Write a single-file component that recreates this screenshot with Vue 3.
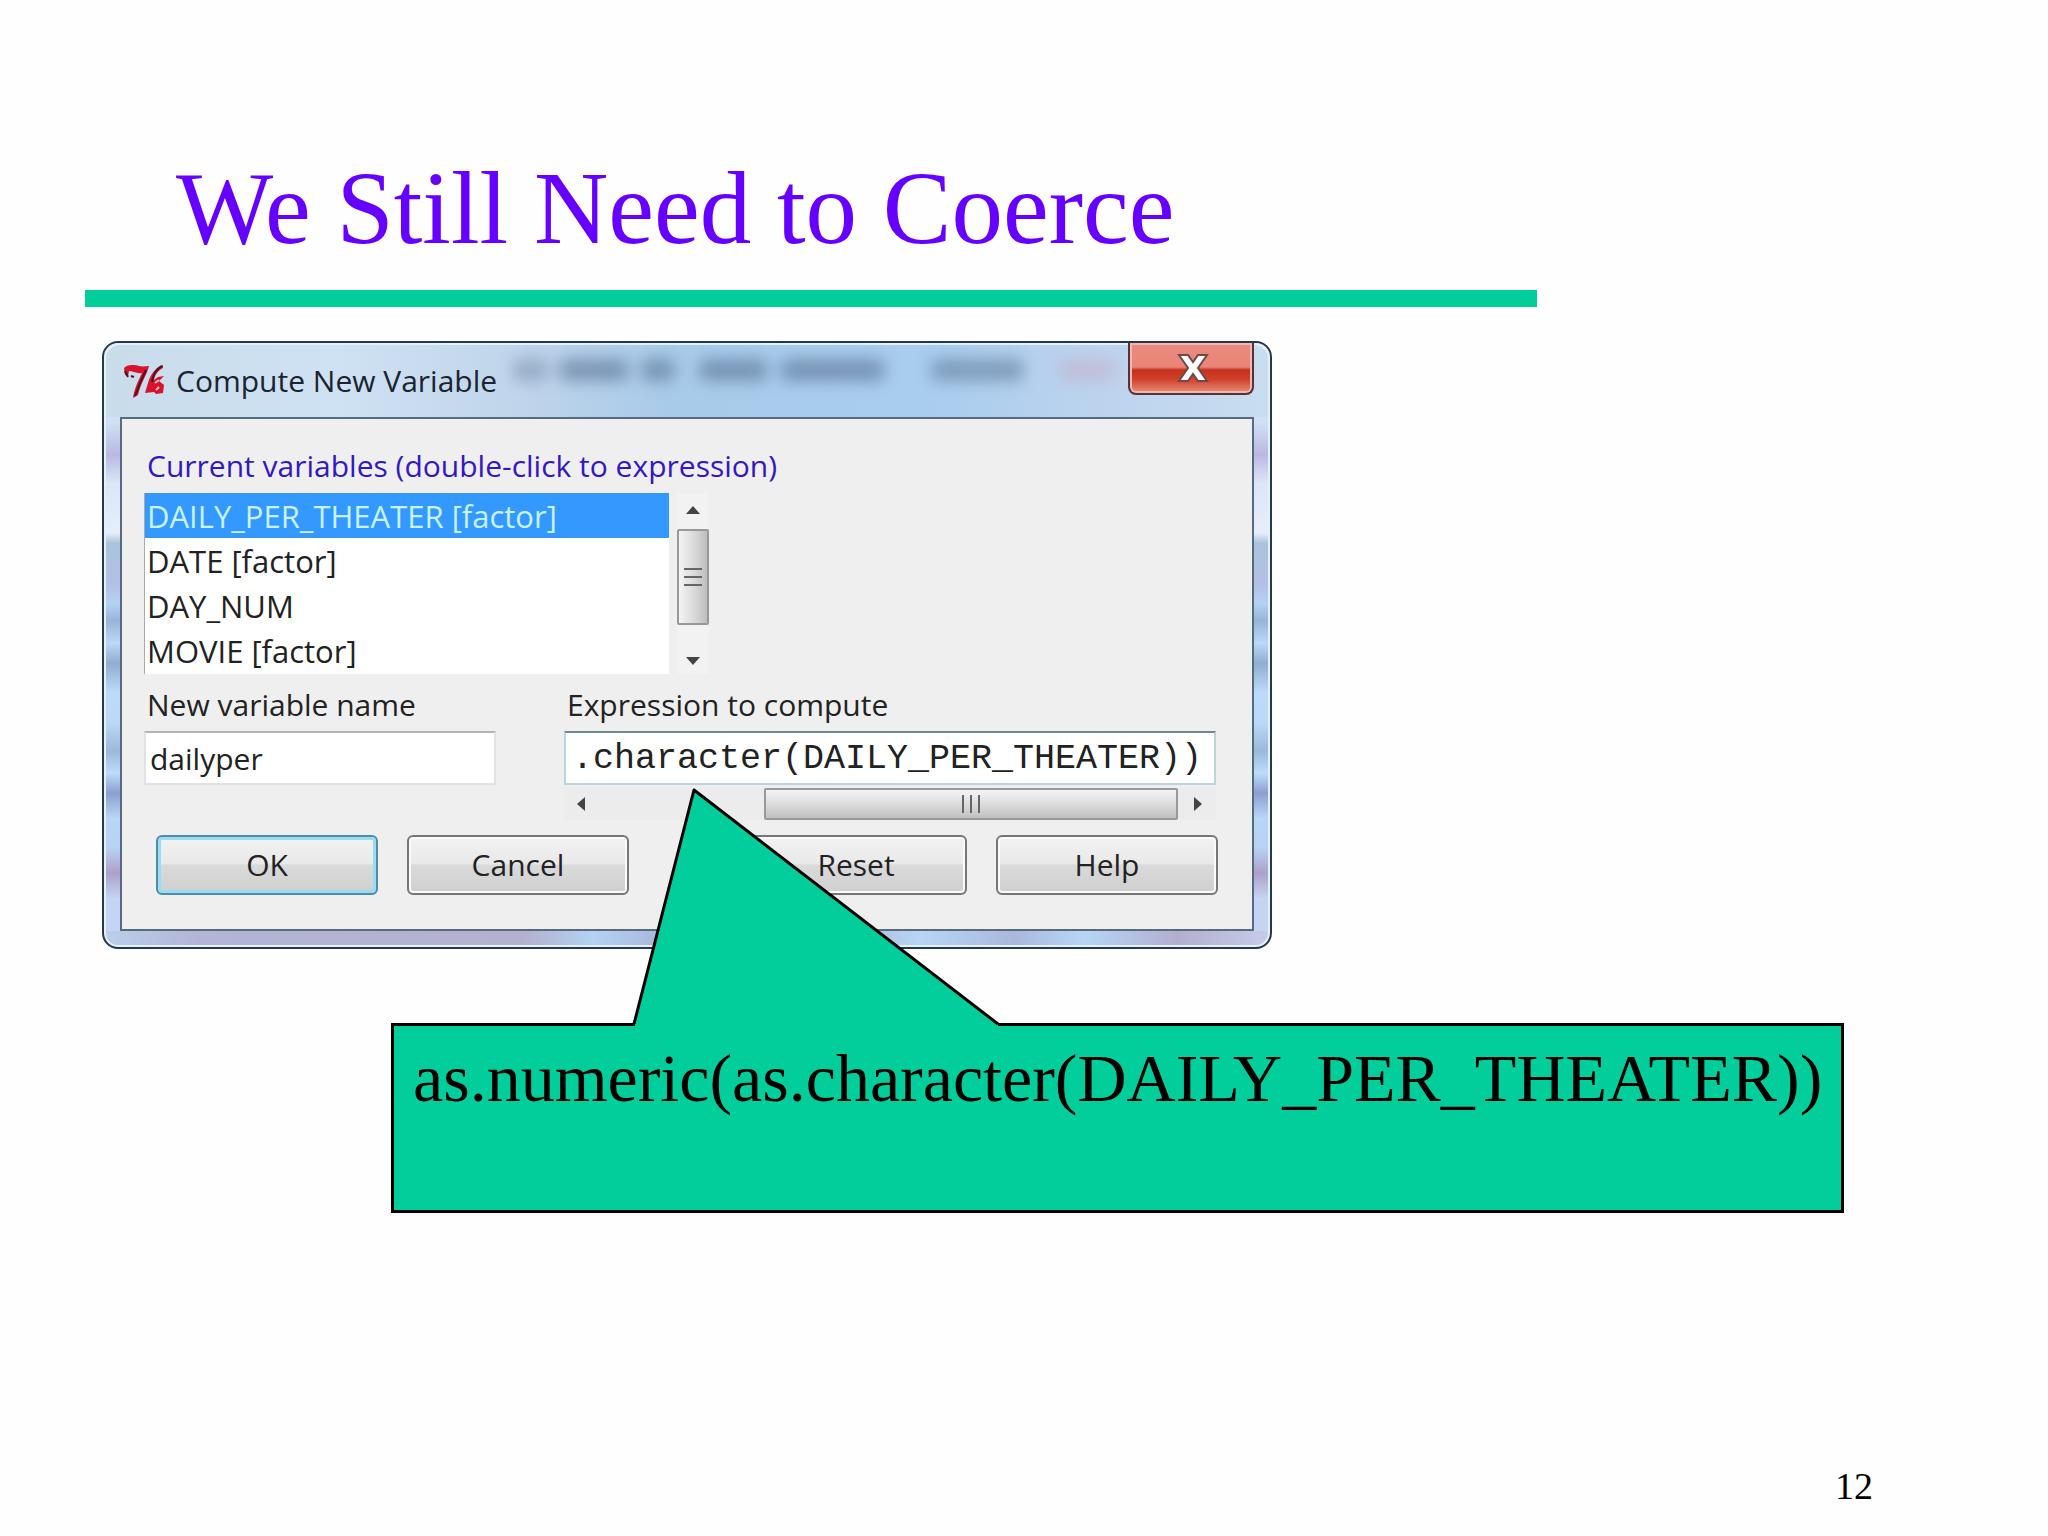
<script setup>
import { ref } from 'vue'

const variables = ['DAILY_PER_THEATER [factor]', 'DATE [factor]', 'DAY_NUM', 'MOVIE [factor]']
const selected = ref(variables[0])
const newName = ref('dailyper')
const expression = ref('.character(DAILY_PER_THEATER))')
</script>

<template>
  <main class="slide">
    <h1 class="title">We Still Need to Coerce</h1>
    <div class="rule"></div>

    <section class="window">
      <header class="titlebar">
        <svg class="logo" viewBox="0 0 42 36" aria-hidden="true">
          <path d="M1 5C5 1 12 2 16 3 20 4 23 3 26 3 24 12 18 19 15 32L10 35C11 27 15 18 19 10 14 11 9 8 6 8L5 13 2 12Z" fill="#d8122c" />
          <path d="M2 8 5 14M8 13l3 1M23 7C19 15 16 22 12 33" stroke="#4a1424" stroke-width="2" fill="none" />
          <path d="M40 2C33 4 27 12 25 20L22 30 31 29 33 31 40 30 41 22 36 18 41 13 35 14 31 17C32 11 36 7 40 5Z" fill="#d8122c" />
          <path d="M39 3C33 6 30 12 29 19" stroke="#4a1424" stroke-width="2" fill="none" />
          <path d="M32 20l4-3M33 27l3-3" stroke="#f0c4b4" stroke-width="2" fill="none" />
        </svg>
        <h2 class="caption">Compute New Variable</h2>
        <span class="glass" aria-hidden="true"><i class="s1"></i><i class="s2"></i><i class="s3"></i><i class="s4"></i><i class="s5"></i><i class="s6"></i><i class="s7"></i></span>
        <button class="close" type="button" aria-label="Close">
          <svg viewBox="0 0 32 30" aria-hidden="true">
            <path d="M2 2h9l5 7 5-7h9l-9 13 9 13h-9l-5-7-5 7H2l9-13Z" fill="#fafafa" stroke="#6b4a4c" stroke-width="2" />
          </svg>
        </button>
      </header>

      <form class="body" @submit.prevent>
        <label class="label heading" for="vars">Current variables (double-click to expression)</label>
        <div class="list-row">
          <select id="vars" v-model="selected" class="list" size="4">
            <option v-for="v in variables" :key="v" :value="v">{{ v }}</option>
          </select>
          <div class="vbar" aria-hidden="true">
            <svg class="arrow" viewBox="0 0 16 10"><path d="M8 1 15 9H1Z" /></svg>
            <div class="vthumb"><b></b><b></b><b></b></div>
            <svg class="arrow" viewBox="0 0 16 10"><path d="M1 1h14L8 9Z" /></svg>
          </div>
        </div>

        <div class="fields">
          <div class="field name">
            <label class="label" for="newname">New variable name</label>
            <input id="newname" v-model="newName" class="box" type="text" />
          </div>
          <div class="field expr">
            <label class="label" for="expr">Expression to compute</label>
            <input id="expr" v-model="expression" class="box mono" type="text" />
            <div class="hbar" aria-hidden="true">
              <svg class="side" viewBox="0 0 10 16"><path d="M9 1v14L1 8Z" /></svg>
              <div class="hthumb"><b></b><b></b><b></b></div>
              <svg class="side" viewBox="0 0 10 16"><path d="M1 1v14L9 8Z" /></svg>
            </div>
          </div>
        </div>

        <div class="buttons">
          <div class="pair">
            <button class="btn default" type="submit">OK</button>
            <button class="btn" type="button">Cancel</button>
          </div>
          <div class="pair">
            <button class="btn" type="button">Reset</button>
            <button class="btn" type="button">Help</button>
          </div>
        </div>
      </form>
    </section>

    <aside class="callout">
      <svg class="pointer" viewBox="0 0 368 240" aria-hidden="true">
        <path d="M3 240V238L62 4 366 238V240Z" fill="#02ce9c" />
        <path d="M2 238 62 4 366 238" fill="none" stroke="#000" stroke-width="3" stroke-linejoin="round" />
      </svg>
      <p>as.numeric(as.character(DAILY_PER_THEATER))</p>
    </aside>

    <footer class="page">12</footer>
  </main>
</template>

<style>
body {
  margin: 0;
  background: #fff;
}
</style>

<style scoped>
* {
  box-sizing: border-box;
}

.slide {
  display: flex;
  flex-direction: column;
  align-items: flex-start;
  min-height: 100vh;
  padding: 148px 175px 27px 102px;
  background: #fefefe;
  font-family: "Liberation Serif", "Times New Roman", serif;
  color: #000;
}

.title {
  margin: 0 0 22px 74px;
  font-size: 103px;
  line-height: 120px;
  font-weight: 400;
  color: #60f;
}

.rule {
  width: 82%;
  height: 17px;
  margin-left: -17px;
  background: #02ce9c;
}

.window {
  display: flex;
  flex-direction: column;
  width: 1170px;
  max-width: 100%;
  margin-top: 34px;
  padding: 0 16px 16px;
  border: 2px solid #26394b;
  border-radius: 16px;
  background:
    linear-gradient(90deg, #b9d0ea, #b3b5d6 8%, #b4b0d0 36%, #b4d2f2 42%, #aab6dc 48%, #b0aed0 62%, #b6d6f6 70%, #aab8dc 78%, #b6d6f6 84%, #b3aed0 92%, #c5cdea) 0 100% / 100% 16px no-repeat,
    linear-gradient(180deg, #d3e6f3 0, #cfe0f4 80px, #b9b8e4 112px, #dce6f6 140px, #e6eefa 190px, #a9c4dc 200px, #b4bfe6 240px, #b4d2f4 260px, #98b4d8 278px, #bcd8f8 300px, #90acd0 320px, #bcdcf9 350px, #bcd8f6 380px, #9cb8da 408px, #bcdcf9 430px, #8c9fd0 450px, #b8d6f6 475px, #b8d2f4 505px, #aea0c8 530px, #c4d4f2 555px);
  font-family: "Open Sans", "Noto Sans", sans-serif;
  box-shadow: inset 0 0 0 2px #e4f1fa;
}

.titlebar {
  display: flex;
  position: relative;
  height: 74px;
  margin: 0 -14px;
  padding: 0 14px 0 17px;
  border-radius: 14px 14px 0 0;
  background: linear-gradient(90deg, #c9dcea, #cfe2f4 20%, #c0d4ea 36%, #a9cbea 48%, #a8cdee 70%, #bcd3ee 85%, #c9ddf0);
  box-shadow: inset 0 2px 0 #e4f1fa;
}

.logo {
  width: 42px;
  height: 36px;
  margin-top: 20px;
}

.caption {
  flex: 1;
  position: relative;
  z-index: 1;
  margin: 17px 0 0 11px;
  font-size: 30px;
  line-height: 42px;
  font-weight: 400;
  color: #1b2430;
}

.glass i {
  position: absolute;
  top: 16px;
  height: 22px;
  border-radius: 8px;
  background: #587294;
  filter: blur(8px);
  opacity: 0.62;
}

.glass .s1 { left: 35%; width: 3%; opacity: 0.4; }
.glass .s2 { left: 39%; width: 6%; }
.glass .s3 { left: 46%; width: 3%; }
.glass .s4 { left: 51%; width: 6%; }
.glass .s5 { left: 58%; width: 9%; }
.glass .s6 { left: 71%; width: 8%; opacity: 0.55; }
.glass .s7 { left: 82%; width: 5%; background: #c9a0b8; opacity: 0.4; }

.close {
  display: flex;
  position: relative;
  align-items: center;
  justify-content: center;
  width: 126px;
  height: 52px;
  padding: 0 0 0 4px;
  border: 2px solid #5a3038;
  border-top: 0;
  border-radius: 0 0 8px 8px;
  background: linear-gradient(180deg, #e98a7e 0, #e98478 48%, #c4311c 54%, #d0402a 72%, #e88f78 100%);
  box-shadow: inset 0 0 0 2px #f0b8b0;
}

.close svg {
  width: 32px;
  height: 30px;
}

.body {
  display: flex;
  flex-direction: column;
  padding: 25px 36px 34px 22px;
  border: 2px solid #566b80;
  background: #f0eff0;
}

.label {
  font-size: 30px;
  line-height: 44px;
  color: #222;
}

.heading {
  color: #3218c4;
  margin: 0 0 5px 3px;
}

.list-row {
  display: flex;
  gap: 8px;
}

.list {
  width: 525px;
  height: 181px;
  padding: 0;
  border: 0;
  border-left: 1px solid #aaa;
  border-radius: 0;
  outline: 0;
  overflow: hidden;
  background: #fff;
  font: 31px/43px "Open Sans", "Noto Sans", sans-serif;
  color: #222;
}

.list option {
  min-height: 45px;
  padding: 2px 2px 0;
  line-height: 43px;
}

.list option:checked {
  background: #39f linear-gradient(#39f, #39f);
  -webkit-text-fill-color: #c8f2ff;
}

.vbar {
  display: flex;
  flex-direction: column;
  align-items: center;
  justify-content: space-between;
  width: 32px;
  padding: 12px 0 8px;
  background: #f2f2f2;
}

.arrow {
  width: 16px;
  height: 10px;
}

.arrow path,
.side path {
  fill: #444;
}

.vthumb,
.hthumb {
  display: flex;
  align-items: center;
  justify-content: center;
  gap: 6px;
  border: 2px solid #999;
  border-radius: 2px;
}

.vthumb {
  flex-direction: column;
  width: 32px;
  height: 96px;
  margin-bottom: 17px;
  background: linear-gradient(90deg, #f4f4f4, #dcdcdc 50%, #bdbdc0);
}

.vthumb b {
  width: 18px;
  height: 2px;
  background: #666;
}

.fields {
  display: flex;
  justify-content: space-between;
}

.field {
  display: flex;
  flex-direction: column;
}

.field .label {
  margin-left: 3px;
  line-height: 44px;
  padding: 9px 0 4px;
}

.name { width: 352px; }
.expr { width: 652px; }

.box {
  width: 100%;
  height: 54px;
  padding: 0 4px;
  border: 2px solid #e0e2e6;
  border-top-color: #b4b4b8;
  border-radius: 0;
  outline: 0;
  background: #fff;
  font: 30px/44px "Open Sans", "Noto Sans", sans-serif;
  color: #222;
}

.box.mono {
  padding: 2px 6px 0;
  border-color: #b8d4de;
  border-top-color: #6f8896;
  font-family: "Liberation Mono", "Courier New", monospace;
  font-size: 35px;
}

.hbar {
  display: flex;
  align-items: center;
  justify-content: space-between;
  height: 32px;
  margin-top: 3px;
  padding: 0 13px 0 12px;
  background: #ececec;
}

.side {
  width: 10px;
  height: 16px;
}

.hthumb {
  width: 414px;
  height: 32px;
  margin-left: auto;
  margin-right: 15px;
  background: linear-gradient(180deg, #f4f4f4, #dcdcdc 50%, #c0c0c2);
}

.hthumb b {
  width: 2px;
  height: 18px;
  background: #666;
}

.buttons {
  display: flex;
  justify-content: space-between;
  margin: 15px -2px 0 12px;
}

.pair {
  display: flex;
  gap: 29px;
}

.btn {
  width: 222px;
  height: 60px;
  padding: 0;
  border: 2px solid #77777a;
  border-radius: 6px;
  background: linear-gradient(180deg, #f2f2f2 0, #e9e9e9 48%, #dadadb 50%, #cfcfd0 100%);
  box-shadow: inset 0 0 0 2px #fafafa;
  font: 30px/44px "Open Sans", "Noto Sans", sans-serif;
  color: #222;
}

.btn.default {
  border-color: #4f8ca8;
  box-shadow: inset 0 0 0 3px #9adcf2;
}

.callout {
  position: relative;
  min-width: 1453px;
  min-height: 190px;
  margin: 74px 0 0 289px;
  padding: 12px 18px 82px 19px;
  border: 3px solid #000;
  background: #02ce9c;
}

.callout p {
  margin: 0;
  font-size: 68px;
  line-height: 80px;
  white-space: nowrap;
}

.pointer {
  position: absolute;
  left: 238px;
  bottom: 100%;
  width: 368px;
  height: 240px;
}

.page {
  margin: auto 0 0 auto;
  font-size: 38px;
  line-height: 46px;
}
</style>
